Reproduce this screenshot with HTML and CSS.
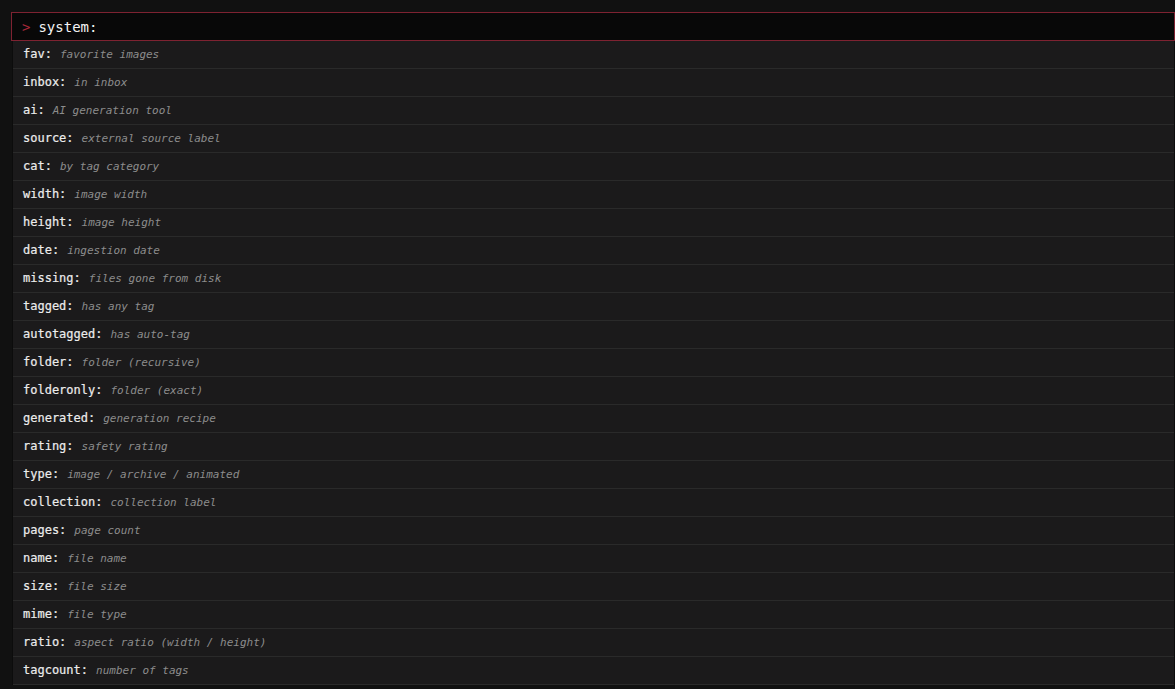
FILE: index.html
```html
<!DOCTYPE html>
<html lang="en">
<head>
    <meta charset="UTF-8">
    <title>Search</title>
    <link rel="stylesheet" href="styles.css">
</head>
<body>

<div class="search">
    <div class="search-box">
        <span class="prompt">&gt;</span>
        <input type="text" id="query" value="system:" spellcheck="false">
    </div>

    <ul class="suggest" id="suggest"></ul>
</div>

<script>
    const filters = [
        ['fav', 'favorite images'],
        ['inbox', 'in inbox'],
        ['ai', 'AI generation tool'],
        ['source', 'external source label'],
        ['cat', 'by tag category'],
        ['width', 'image width'],
        ['height', 'image height'],
        ['date', 'ingestion date'],
        ['missing', 'files gone from disk'],
        ['tagged', 'has any tag'],
        ['autotagged', 'has auto-tag'],
        ['folder', 'folder (recursive)'],
        ['folderonly', 'folder (exact)'],
        ['generated', 'generation recipe'],
        ['rating', 'safety rating'],
        ['type', 'image / archive / animated'],
        ['collection', 'collection label'],
        ['pages', 'page count'],
        ['name', 'file name'],
        ['size', 'file size'],
        ['mime', 'file type'],
        ['ratio', 'aspect ratio (width / height)'],
        ['tagcount', 'number of tags']
    ];

    const list = document.getElementById('suggest');

    filters.forEach(([key, desc]) => {
        const li = document.createElement('li');
        li.innerHTML = `<span class="key">${key}:</span><span class="desc">${desc}</span>`;
        list.appendChild(li);
    });
</script>

</body>
</html>
```

FILE: styles.css
```css
/* Global Styles */
body {
    margin: 0;
    background: #111111;
    font-family: 'DejaVu Sans Mono', monospace;
    color: #e2e2e2;
    overflow: hidden;
}

.search {
    padding: 12px 0 0 11px;
}

.search-box {
    display: flex;
    align-items: center;
    height: 27px;
    background: #080808;
    border: 1px solid #7e2231;
    padding: 0 10px;
}

.prompt {
    color: #a8283a;
    font-size: 14px;
    margin-right: 8px;
}

#query {
    flex: 1;
    background: transparent;
    border: none;
    outline: none;
    padding: 0;
    font-family: inherit;
    font-size: 14px;
    color: #f4f4f4;
}

/* Suggestion list */
.suggest {
    list-style: none;
    margin: 0 0 0 1px;
    padding: 0;
    background: #1b1a1b;
    border-left: 1px solid #0c0c0c;
    border-right: 1px solid #0c0c0c;
}

.suggest li {
    display: flex;
    align-items: baseline;
    height: 27px;
    line-height: 27px;
    padding-left: 10px;
    border-bottom: 1px solid #2a2a2a;
}

.key {
    font-size: 12px;
    color: #ececec;
    margin-right: 8px;
    -webkit-text-stroke: 0.2px #ececec;
}

.desc {
    font-size: 11px;
    font-style: italic;
    color: #8c8c8c;
}
```
